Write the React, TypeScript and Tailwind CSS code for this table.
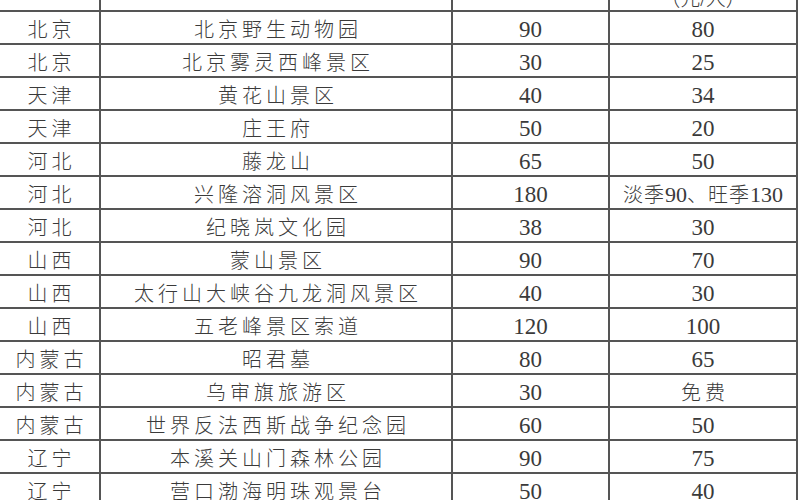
type Row = {
  province: string
  spot: string
  price: string
  discount: string
}

const rows: Row[] = [
  { province: '北京', spot: '北京野生动物园', price: '90', discount: '80' },
  { province: '北京', spot: '北京雾灵西峰景区', price: '30', discount: '25' },
  { province: '天津', spot: '黄花山景区', price: '40', discount: '34' },
  { province: '天津', spot: '庄王府', price: '50', discount: '20' },
  { province: '河北', spot: '藤龙山', price: '65', discount: '50' },
  { province: '河北', spot: '兴隆溶洞风景区', price: '180', discount: 'season' },
  { province: '河北', spot: '纪晓岚文化园', price: '38', discount: '30' },
  { province: '山西', spot: '蒙山景区', price: '90', discount: '70' },
  { province: '山西', spot: '太行山大峡谷九龙洞风景区', price: '40', discount: '30' },
  { province: '山西', spot: '五老峰景区索道', price: '120', discount: '100' },
  { province: '内蒙古', spot: '昭君墓', price: '80', discount: '65' },
  { province: '内蒙古', spot: '乌审旗旅游区', price: '30', discount: '免费' },
  { province: '内蒙古', spot: '世界反法西斯战争纪念园', price: '60', discount: '50' },
  { province: '辽宁', spot: '本溪关山门森林公园', price: '90', discount: '75' },
  { province: '辽宁', spot: '营口渤海明珠观景台', price: '50', discount: '40' },
]

const font = { fontFamily: '"Liberation Serif", "Noto Sans CJK SC", serif' }

const cjk = 'text-[20px] font-light tracking-[4px] pl-[4px]'
const num = 'text-[23px]'

function DiscountCell({ value }: { value: string }) {
  if (value === 'season') {
    return (
      <span className="whitespace-nowrap">
        <span className="text-[20px] font-light tracking-[1px]">淡季</span>
        <span className="text-[22px]">90</span>
        <span className="text-[20px] font-light tracking-[1px]">、旺季</span>
        <span className="text-[22px]">130</span>
      </span>
    )
  }
  if (/^\d+$/.test(value)) return <span className={num}>{value}</span>
  return <span className={cjk}>{value}</span>
}

export default function App() {
  const cell = 'flex items-center justify-center border-b-2 border-r-2 border-[#555] pt-[4px] leading-none'
  return (
    <div className="w-[800px] h-[500px] overflow-hidden bg-white text-[#3a3a3a]" style={font}>
      <div className="grid grid-cols-[101px_352px_157px_188px]">
        {/* header row, mostly scrolled out of view */}
        <div className="h-[12px] border-b-2 border-r-2 border-[#555]" />
        <div className="h-[12px] border-b-2 border-r-2 border-[#555]" />
        <div className="h-[12px] border-b-2 border-r-2 border-[#555]" />
        <div className="h-[12px] border-b-2 border-r-2 border-[#555] overflow-hidden flex items-end justify-center">
          <span className="text-[20px] font-light leading-none mb-[1px] whitespace-nowrap">（元/人）</span>
        </div>

        {rows.map((r, i) => (
          <div key={i} className="contents">
            <div className={`${cell} h-[33px]`}>
              <span className={cjk}>{r.province}</span>
            </div>
            <div className={`${cell} h-[33px]`}>
              <span className={`${cjk} whitespace-nowrap`}>{r.spot}</span>
            </div>
            <div className={`${cell} h-[33px]`}>
              <span className={num}>{r.price}</span>
            </div>
            <div className={`${cell} h-[33px]`}>
              <DiscountCell value={r.discount} />
            </div>
          </div>
        ))}
      </div>
    </div>
  )
}
